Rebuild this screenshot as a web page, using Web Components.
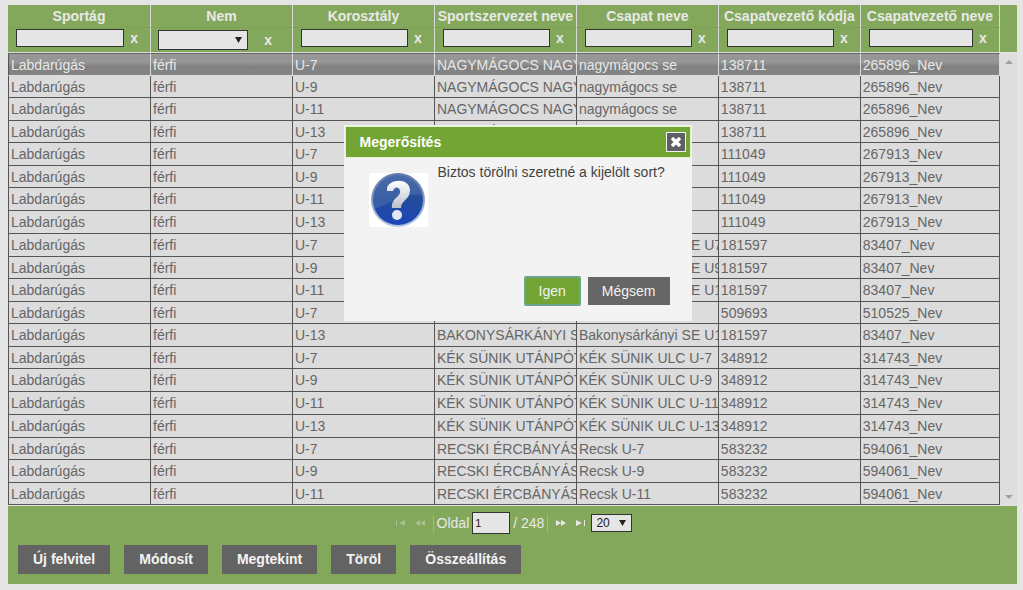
<!DOCTYPE html>
<html lang="hu">
<head>
<meta charset="utf-8">
<title>Csapatok</title>
<style>
  body { margin: 0; background: #e5e5e5; font: 14px/18px "Liberation Sans", Arial, sans-serif; color: #666; }
</style>
</head>
<body>
<team-page></team-page>

<template id="page-tpl">
  <style>
    :host { display: block; position: relative; padding: 5px 6px 6px 8px; }
    .actions { display: flex; flex-wrap: wrap; gap: 14px; padding: 10px; }
    footer { background: #83a85b; margin-top: 1px; }
    confirm-dialog { position: absolute; top: 125px; left: calc(50% - 168px); }
  </style>
  <team-grid></team-grid>
  <footer>
    <grid-pager></grid-pager>
    <div class="actions">
      <action-button>Új felvitel</action-button>
      <action-button>Módosít</action-button>
      <action-button>Megtekint</action-button>
      <action-button>Töröl</action-button>
      <action-button>Összeállítás</action-button>
    </div>
  </footer>
  <confirm-dialog heading="Megerősítés">
    Biztos törölni szeretné a kijelölt sort?
    <action-button slot="buttons" kind="primary">Igen</action-button>
    <action-button slot="buttons" kind="plain">Mégsem</action-button>
  </confirm-dialog>
</template>

<template id="grid-tpl">
  <style>
    :host { display: grid; grid-template-columns: minmax(0, 1fr) 17px; }
    table { width: 100%; table-layout: fixed; border-collapse: separate; border-spacing: 0; }
    col { width: 14.31%; }
    col:first-child { width: 14.42%; }
    col:last-child { width: auto; }
    th, td { box-sizing: border-box; padding: 0; overflow: hidden; white-space: nowrap; }
    th { background: #83a85b; color: #e8e8e8; height: 22px; border-right: 1px solid #dcdcdc; line-height: 20px; text-align: center; }
    thead td { background: #83a85b; height: 26px; vertical-align: top; border-right: 1px solid #dcdcdc; border-bottom: 1px solid #dcdcdc; }
    thead tr:last-child td { border-top: 1px solid #7da255; }
    tbody td { height: 23px; line-height: 20px; padding-left: 2px; background: #dcdcdc; border-right: 1px solid #555; border-bottom: 1px solid #555; }
    tbody tr:nth-child(even) td { height: 22px; }
    tbody tr:nth-child(8n) td { height: 23px; }
    tbody td:first-child { border-left: 1px solid #555; }
    tbody tr.selected td { color: #e8e8e8; background: linear-gradient(#969696 0 40%, #808080 60%, #858585); border-top: 1px solid #666; border-right-color: #dcdcdc; border-bottom-color: #dcdcdc; }
    .side { display: flex; flex-direction: column; }
    .cap { height: 47px; background: #83a85b; }
    .bar { flex: 1; margin-top: 1px; background: #dedede; display: flex; flex-direction: column; justify-content: space-between; align-items: center; padding: 6px 0 5px; }
    svg { display: block; width: 8px; height: 5px; fill: #a0a0a0; }
  </style>
  <table>
    <colgroup><col><col><col><col><col><col><col></colgroup>
    <thead><tr class="names"></tr><tr class="filters"></tr></thead>
    <tbody></tbody>
  </table>
  <div class="side">
    <div class="cap"></div>
    <div class="bar">
      <svg viewBox="0 0 8 5"><path d="M0 5 4 1 8 5z"/></svg>
      <svg viewBox="0 0 8 5"><path d="M0 0 4 4 8 0z"/></svg>
    </div>
  </div>
</template>

<template id="filter-tpl">
  <style>
    :host { display: flex; align-items: center; height: 23px; padding: 0 12px 4px 8px; box-sizing: border-box; }
    input, select { box-sizing: border-box; margin: 0; border: 1px solid #333; border-radius: 0; background: #e5e5e5; font: 12px "Liberation Sans", Arial, sans-serif; color: #222; }
    input { flex: 1; min-width: 0; height: 18px; padding: 0 2px; }
    .pick { position: relative; flex: 0 1 90px; }
    select { appearance: none; width: 100%; height: 20px; display: block; }
    svg { position: absolute; right: 6px; top: 7px; width: 7px; height: 6px; fill: #222; pointer-events: none; }
    button { border: 0; padding: 0; background: none; color: #e8e8e8; font: bold 14px/18px "Liberation Sans", Arial, sans-serif; width: 8px; margin-left: 6px; }
    .pick + button { margin-left: 16px; }
    :host([kind=select]) { padding: 0 12px 0 7px; }
  </style>
</template>

<template id="pager-tpl">
  <style>
    :host { display: flex; align-items: center; justify-content: center; height: 24px; padding: 5px 3px 0 0; color: #e8e8e8; }
    button { border: 0; padding: 0; margin: 0 4px; background: none; width: 12px; height: 16px; display: flex; align-items: center; justify-content: center; }
    button:disabled { opacity: .4; }
    svg { width: 12px; height: 6px; fill: #e8e8e8; }
    .sep { width: 1px; height: 17px; background: #a0bd82; margin: 0 3px; }
    label { display: flex; align-items: center; gap: 3px; }
    input, select { box-sizing: border-box; border: 1px solid #333; border-radius: 0; background: #e5e5e5; color: #222; margin: 0; }
    input { width: 38px; height: 22px; padding: 0 2px; font: 11px "Liberation Sans", Arial, sans-serif; }
    .total { margin-left: 3px; }
    .pick { position: relative; }
    select { appearance: none; width: 41px; height: 18px; padding: 0 4px; font: 12px "Liberation Sans", Arial, sans-serif; display: block; }
    .pick svg { position: absolute; right: 6px; top: 6px; width: 7px; height: 6px; fill: #222; pointer-events: none; }
  </style>
  <button disabled aria-label="Első"><svg viewBox="0 0 12 6"><path d="M2 0h1v6h-1zM11 0v6L5 3z"/></svg></button>
  <button disabled aria-label="Előző"><svg viewBox="0 0 12 6"><path d="M6 0v6L1 3zM11 0v6L6 3z"/></svg></button>
  <span class="sep"></span>
  <label>Oldal <input value="1"></label>
  <span class="total">/ 248</span>
  <span class="sep"></span>
  <button aria-label="Következő"><svg viewBox="0 0 12 6"><path d="M1 0v6L6 3zM6 0v6L11 3z"/></svg></button>
  <button aria-label="Utolsó"><svg viewBox="0 0 12 6"><path d="M1 0v6L7 3zM9 0h1v6h-1z"/></svg></button>
  <span class="pick"><select aria-label="Sorok száma"><option>20</option></select><svg viewBox="0 0 7 6"><path d="M0 0h7L3.500 6z"/></svg></span>
</template>

<template id="button-tpl">
  <style>
    :host { display: block; }
    button { display: block; border: 0; margin: 0; padding: 0 15px; height: 29px; background: #636363; color: #f3f3f3; font: bold 14px/29px "Liberation Sans", Arial, sans-serif; }
    :host([kind=plain]) button { font-weight: normal; padding: 0 14px; height: 28px; line-height: 28px; background: #666; }
    :host([kind=primary]) button { font-weight: normal; padding: 0 13px; height: 30px; line-height: 26px; background: #72a533; border: 2px solid #6aa58c; border-radius: 2px; }
  </style>
  <button type="button"><slot></slot></button>
</template>

<template id="dialog-tpl">
  <style>
    :host { display: block; box-sizing: border-box; width: 348px; padding: 2px; background: #f3f3f3; color: #444; }
    header { display: flex; align-items: center; justify-content: space-between; height: 30px; padding: 0 4px 0 14px; background: #72a533; box-shadow: 0 0 0 1px #e3f3c8; }
    h2 { margin: 0; font: bold 14px/18px "Liberation Sans", Arial, sans-serif; color: #fff; }
    header button { width: 20px; height: 20px; padding: 0; border: 1px solid #f3f3f3; background: #5f5f68; display: grid; place-items: center; }
    header svg { width: 10px; height: 10px; stroke: #fff; stroke-width: 3.5; }
    .body { display: flex; gap: 10px; min-height: 113px; padding: 6px 14px 0 23px; }
    .icon { flex: none; width: 59px; height: 54px; margin-top: 10px; background: #fff; }
    p { margin: 0; }
    .buttons { display: flex; align-items: center; justify-content: flex-end; gap: 7px; padding: 0 20px 13px 0; }
  </style>
  <header><h2></h2>
    <button aria-label="Bezárás"><svg viewBox="0 0 10 10"><path d="M1 1 9 9M9 1 1 9"/></svg></button>
  </header>
  <div class="body">
    <svg class="icon" viewBox="0 0 59 54">
      <defs>
        <linearGradient id="ball" x1="0" y1="0" x2="0" y2="1"><stop offset="0" stop-color="#3a5c9e"/><stop offset=".5" stop-color="#234b9c"/><stop offset="1" stop-color="#1c46b8"/></linearGradient>
        <linearGradient id="ring" x1="0" y1="0" x2="0" y2="1"><stop offset="0" stop-color="#5f79a8"/><stop offset="1" stop-color="#b8c8e0"/></linearGradient>
        <linearGradient id="mark" x1="0" y1="0" x2="0" y2="1"><stop offset="0" stop-color="#fff"/><stop offset="1" stop-color="#b9c0cc"/></linearGradient>
      </defs>
      <circle cx="29" cy="27" r="27" fill="url(#ring)"/>
      <circle cx="29" cy="27" r="25" fill="url(#ball)"/>
      <path d="M4 31A25 25 0 0 1 54 22Q40 20 28 26T5 36z" fill="#7190c0" opacity=".3"/>
      <path d="M18 15C20 6 40 4 41 17C41 27 32 27 32 35H23C22 25 32 24 31 18C30 13 25 14 24 18L18 18z" fill="url(#mark)"/>
      <circle cx="28" cy="42" r="5" fill="#e3e8f0"/>
    </svg>
    <p><slot></slot></p>
  </div>
  <div class="buttons"><slot name="buttons"></slot></div>
</template>

<script>
  const columns = ["Sportág", "Nem", "Korosztály", "Sportszervezet neve", "Csapat neve", "Csapatvezető kódja", "Csapatvezető neve"];
  const nagy = ["NAGYMÁGOCS NAGY", "nagymágocs se", "138711", "265896_Nev"];
  const other = ["", "", "111049", "267913_Nev"];
  const bak = team => ["BAKONYSÁRKÁNYI SE", "Bakonysárkányi SE " + team, "181597", "83407_Nev"];
  const kek = team => ["KÉK SÜNIK UTÁNPÓT", "KÉK SÜNIK ULC " + team, "348912", "314743_Nev"];
  const recsk = team => ["RECSKI ÉRCBÁNYÁSZ", "Recsk " + team, "583232", "594061_Nev"];
  const rows = [
    ["U-7", ...nagy], ["U-9", ...nagy], ["U-11", ...nagy], ["U-13", ...nagy],
    ["U-7", ...other], ["U-9", ...other], ["U-11", ...other], ["U-13", ...other],
    ["U-7", ...bak("U7")], ["U-9", ...bak("U9")], ["U-11", ...bak("U1")],
    ["U-7", "", "", "509693", "510525_Nev"],
    ["U-13", ...bak("U1")],
    ...["U-7", "U-9", "U-11", "U-13"].map(a => [a, ...kek(a)]),
    ...["U-7", "U-9", "U-11"].map(a => [a, ...recsk(a)])
  ];

  class Base extends HTMLElement {
    constructor(id) {
      super();
      this.attachShadow({ mode: "open" }).append(document.getElementById(id).content.cloneNode(true));
    }
  }

  customElements.define("action-button", class extends Base { constructor() { super("button-tpl"); } });
  customElements.define("grid-pager", class extends Base { constructor() { super("pager-tpl"); } });

  customElements.define("column-filter", class extends Base {
    constructor() { super("filter-tpl"); }
    connectedCallback() {
      const label = this.getAttribute("label");
      const field = this.getAttribute("kind") === "select"
        ? `<span class="pick"><select aria-label="${label}"><option></option></select><svg viewBox="0 0 7 6"><path d="M0 0h7L3.500 6z"/></svg></span>`
        : `<input aria-label="${label}">`;
      this.shadowRoot.querySelector("style").insertAdjacentHTML("afterend", field + `<button type="button">x</button>`);
    }
  });

  customElements.define("team-grid", class extends Base {
    constructor() {
      super("grid-tpl");
      const $ = s => this.shadowRoot.querySelector(s);
      $(".names").innerHTML = columns.map(c => `<th scope="col">${c}</th>`).join("");
      $(".filters").innerHTML = columns.map((c, i) => `<td><column-filter label="${c}" kind="${i === 1 ? "select" : "text"}"></column-filter></td>`).join("");
      $("tbody").innerHTML = rows.map((r, i) => `<tr${i ? "" : ' class="selected"'}>` +
        ["Labdarúgás", "férfi", ...r].map(v => `<td>${v}</td>`).join("") + "</tr>").join("");
    }
  });

  customElements.define("confirm-dialog", class extends Base {
    constructor() { super("dialog-tpl"); }
    connectedCallback() {
      this.setAttribute("role", "dialog");
      this.shadowRoot.querySelector("h2").textContent = this.getAttribute("heading");
    }
  });

  customElements.define("team-page", class extends Base { constructor() { super("page-tpl"); } });
</script>
</body>
</html>
